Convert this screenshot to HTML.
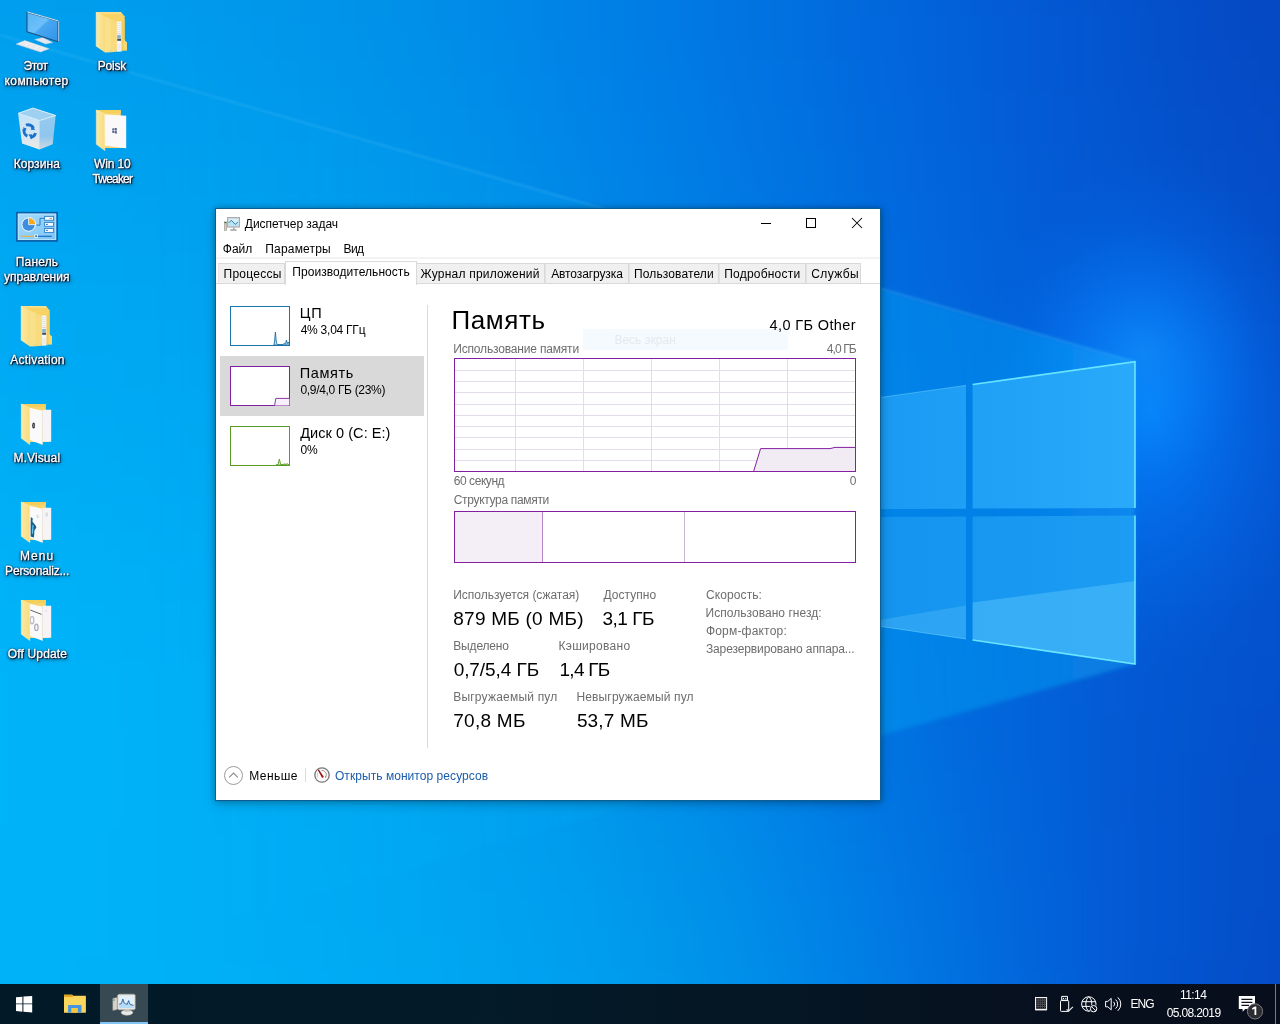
<!DOCTYPE html>
<html lang="ru"><head><meta charset="utf-8"><title>Desktop</title>
<style>
html,body{margin:0;padding:0;}
body{width:1280px;height:1024px;overflow:hidden;position:relative;background:#0078d7;font-family:"Liberation Sans",sans-serif;}
.abs{position:absolute;}
.t{position:absolute;white-space:pre;line-height:1;font-family:"Liberation Sans",sans-serif;}
svg{position:absolute;overflow:visible;}
#texts{position:absolute;left:0;top:0;width:1280px;height:1024px;will-change:transform;}

</style></head>
<body>
<svg id="wp" width="1280" height="1024" viewBox="0 0 1280 1024" style="left:0;top:0;overflow:hidden">
<defs>
  <filter id="bl" filterUnits="userSpaceOnUse" x="-400" y="-400" width="2080" height="1824" color-interpolation-filters="sRGB"><feGaussianBlur stdDeviation="75"/></filter>
  <filter id="b2" filterUnits="userSpaceOnUse" x="-50" y="-50" width="1380" height="1124"><feGaussianBlur stdDeviation="1.0"/></filter>
  <filter id="b3" filterUnits="userSpaceOnUse" x="-200" y="-200" width="1680" height="1424"><feGaussianBlur stdDeviation="2.2"/></filter>
  <radialGradient id="glow" cx="1150" cy="410" r="250" gradientUnits="userSpaceOnUse" gradientTransform="translate(1150 410) scale(0.7 1) translate(-1150 -410)">
    <stop offset="0" stop-color="#068cff" stop-opacity="0.85"/>
    <stop offset="0.45" stop-color="#047efc" stop-opacity="0.42"/>
    <stop offset="1" stop-color="#0470f0" stop-opacity="0"/>
  </radialGradient>
  <radialGradient id="glow2" cx="1142" cy="352" r="120" gradientUnits="userSpaceOnUse">
    <stop offset="0" stop-color="#1696ff" stop-opacity="0.5"/>
    <stop offset="0.5" stop-color="#0e8cff" stop-opacity="0.22"/>
    <stop offset="1" stop-color="#0a84ff" stop-opacity="0"/>
  </radialGradient>
  <linearGradient id="beam" x1="1135" y1="0" x2="150" y2="0" gradientUnits="userSpaceOnUse">
    <stop offset="0" stop-color="#12c0ff" stop-opacity="0.34"/>
    <stop offset="0.25" stop-color="#12c0ff" stop-opacity="0.26"/>
    <stop offset="0.6" stop-color="#18c4ff" stop-opacity="0.08"/>
    <stop offset="1" stop-color="#1ec8ff" stop-opacity="0"/>
  </linearGradient>
  <linearGradient id="ray" x1="1135" y1="0" x2="0" y2="0" gradientUnits="userSpaceOnUse">
    <stop offset="0" stop-color="#7fd6ff" stop-opacity="0.22"/>
    <stop offset="0.3" stop-color="#7fd6ff" stop-opacity="0.2"/>
    <stop offset="1" stop-color="#7fd6ff" stop-opacity="0.2"/>
  </linearGradient>
  <linearGradient id="pane" x1="880" y1="0" x2="1135" y2="0" gradientUnits="userSpaceOnUse">
    <stop offset="0" stop-color="#1a9af3"/>
    <stop offset="1" stop-color="#29aafa"/>
  </linearGradient>
  <linearGradient id="paneL" x1="880" y1="0" x2="1135" y2="0" gradientUnits="userSpaceOnUse">
    <stop offset="0" stop-color="#1494ef"/>
    <stop offset="1" stop-color="#1c9cf2"/>
  </linearGradient>
</defs>
<g filter="url(#bl)">
<rect x="-400" y="-400" width="480" height="464" fill="#009eed"/>
<rect x="80" y="-400" width="160" height="464" fill="#009aec"/>
<rect x="240" y="-400" width="160" height="464" fill="#0094ea"/>
<rect x="400" y="-400" width="160" height="464" fill="#008ae8"/>
<rect x="560" y="-400" width="160" height="464" fill="#007ce5"/>
<rect x="720" y="-400" width="160" height="464" fill="#016ee0"/>
<rect x="880" y="-400" width="160" height="464" fill="#025fd8"/>
<rect x="1040" y="-400" width="160" height="464" fill="#0452ce"/>
<rect x="1200" y="-400" width="480" height="464" fill="#0546c0"/>
<rect x="-400" y="64" width="480" height="128" fill="#00a4f0"/>
<rect x="80" y="64" width="160" height="128" fill="#00a0ee"/>
<rect x="240" y="64" width="160" height="128" fill="#0099ec"/>
<rect x="400" y="64" width="160" height="128" fill="#008ee9"/>
<rect x="560" y="64" width="160" height="128" fill="#0080e6"/>
<rect x="720" y="64" width="160" height="128" fill="#0171e1"/>
<rect x="880" y="64" width="160" height="128" fill="#0261da"/>
<rect x="1040" y="64" width="160" height="128" fill="#0454d0"/>
<rect x="1200" y="64" width="480" height="128" fill="#054ac5"/>
<rect x="-400" y="192" width="480" height="128" fill="#00a8f2"/>
<rect x="80" y="192" width="160" height="128" fill="#00a5f1"/>
<rect x="240" y="192" width="160" height="128" fill="#009eed"/>
<rect x="400" y="192" width="160" height="128" fill="#0093ea"/>
<rect x="560" y="192" width="160" height="128" fill="#0084e6"/>
<rect x="720" y="192" width="160" height="128" fill="#0074e2"/>
<rect x="880" y="192" width="160" height="128" fill="#0264dc"/>
<rect x="1040" y="192" width="160" height="128" fill="#0357d2"/>
<rect x="1200" y="192" width="480" height="128" fill="#044dc9"/>
<rect x="-400" y="320" width="480" height="128" fill="#00abf4"/>
<rect x="80" y="320" width="160" height="128" fill="#00a8f2"/>
<rect x="240" y="320" width="160" height="128" fill="#00a1ef"/>
<rect x="400" y="320" width="160" height="128" fill="#0097eb"/>
<rect x="560" y="320" width="160" height="128" fill="#0088e7"/>
<rect x="720" y="320" width="160" height="128" fill="#0077e4"/>
<rect x="880" y="320" width="160" height="128" fill="#0266dd"/>
<rect x="1040" y="320" width="160" height="128" fill="#035ad4"/>
<rect x="1200" y="320" width="480" height="128" fill="#0450cd"/>
<rect x="-400" y="448" width="480" height="128" fill="#00aff6"/>
<rect x="80" y="448" width="160" height="128" fill="#00adf5"/>
<rect x="240" y="448" width="160" height="128" fill="#00a5f1"/>
<rect x="400" y="448" width="160" height="128" fill="#009aec"/>
<rect x="560" y="448" width="160" height="128" fill="#008be8"/>
<rect x="720" y="448" width="160" height="128" fill="#0079e4"/>
<rect x="880" y="448" width="160" height="128" fill="#0268de"/>
<rect x="1040" y="448" width="160" height="128" fill="#035cd6"/>
<rect x="1200" y="448" width="480" height="128" fill="#0452ce"/>
<rect x="-400" y="576" width="480" height="128" fill="#00b4f9"/>
<rect x="80" y="576" width="160" height="128" fill="#00b1f7"/>
<rect x="240" y="576" width="160" height="128" fill="#00a9f3"/>
<rect x="400" y="576" width="160" height="128" fill="#009eed"/>
<rect x="560" y="576" width="160" height="128" fill="#008ee9"/>
<rect x="720" y="576" width="160" height="128" fill="#007be5"/>
<rect x="880" y="576" width="160" height="128" fill="#0268de"/>
<rect x="1040" y="576" width="160" height="128" fill="#035ad4"/>
<rect x="1200" y="576" width="480" height="128" fill="#0450cd"/>
<rect x="-400" y="704" width="480" height="128" fill="#00b4f9"/>
<rect x="80" y="704" width="160" height="128" fill="#00b1f7"/>
<rect x="240" y="704" width="160" height="128" fill="#00aaf4"/>
<rect x="400" y="704" width="160" height="128" fill="#00a0ee"/>
<rect x="560" y="704" width="160" height="128" fill="#0093ea"/>
<rect x="720" y="704" width="160" height="128" fill="#007fe5"/>
<rect x="880" y="704" width="160" height="128" fill="#016ade"/>
<rect x="1040" y="704" width="160" height="128" fill="#0358d3"/>
<rect x="1200" y="704" width="480" height="128" fill="#044dc9"/>
<rect x="-400" y="832" width="480" height="128" fill="#00b3f8"/>
<rect x="80" y="832" width="160" height="128" fill="#00b1f7"/>
<rect x="240" y="832" width="160" height="128" fill="#00abf4"/>
<rect x="400" y="832" width="160" height="128" fill="#00a4f0"/>
<rect x="560" y="832" width="160" height="128" fill="#0099ec"/>
<rect x="720" y="832" width="160" height="128" fill="#0086e7"/>
<rect x="880" y="832" width="160" height="128" fill="#016ee0"/>
<rect x="1040" y="832" width="160" height="128" fill="#0359d4"/>
<rect x="1200" y="832" width="480" height="128" fill="#044cc8"/>
<rect x="-400" y="960" width="480" height="464" fill="#00b2f8"/>
<rect x="80" y="960" width="160" height="464" fill="#00b1f7"/>
<rect x="240" y="960" width="160" height="464" fill="#00adf5"/>
<rect x="400" y="960" width="160" height="464" fill="#00a6f1"/>
<rect x="560" y="960" width="160" height="464" fill="#009ced"/>
<rect x="720" y="960" width="160" height="464" fill="#008ae8"/>
<rect x="880" y="960" width="160" height="464" fill="#0170e1"/>
<rect x="1040" y="960" width="160" height="464" fill="#0359d4"/>
<rect x="1200" y="960" width="480" height="464" fill="#054ac5"/>
</g>
<rect width="1280" height="1024" fill="url(#glow)"/>
<rect width="1280" height="1024" fill="url(#glow2)"/>
<!-- light cone to the left -->
<polygon points="1135,362 -120,0 -120,1017 1135,664" fill="url(#beam)" filter="url(#b3)"/>
<line x1="1135" y1="362" x2="0" y2="35" stroke="url(#ray)" stroke-width="1.8" filter="url(#b2)"/>
<!-- logo panes -->
<polygon points="972.6,384.5 1135,361.7 1135,508 972.6,508.6" fill="url(#pane)"/>
<polygon points="840,403.2 966,385.4 966,508.7 840,509.2" fill="url(#pane)"/>
<polygon points="972.6,516.5 1135,515.6 1135,664 972.6,640" fill="url(#paneL)"/>
<polygon points="840,517.2 966,516.5 966,639 840,620.4" fill="url(#paneL)"/>
<!-- reflections in lower panes -->
<polygon points="972.6,602.4 1135,581 1135,664 972.6,640" fill="#4cbcfa" fill-opacity="0.6"/>
<polygon points="840,626.5 966,605.4 966,639 840,620.4" fill="#43b4f8" fill-opacity="0.5"/>
<!-- bright edges -->
<polyline points="972.6,384.5 1135,361.7 1135,508" fill="none" stroke="#72ecff" stroke-opacity="0.9" stroke-width="1.6"/>
<polyline points="1135,515.6 1135,664 972.6,640" fill="none" stroke="#72ecff" stroke-opacity="0.9" stroke-width="1.6"/>
<polyline points="840,403.2 966,385.4" fill="none" stroke="#6fd6ff" stroke-opacity="0.5" stroke-width="1"/>
<polyline points="840,620.4 966,639" fill="none" stroke="#6fd6ff" stroke-opacity="0.5" stroke-width="1"/>
</svg>
<svg id="icons" width="160" height="700" viewBox="0 0 160 700" style="left:0;top:0">
<defs>
  <linearGradient id="scr" x1="0" y1="0" x2="1" y2="1">
    <stop offset="0" stop-color="#5cb4f4"/><stop offset="0.45" stop-color="#6cc0fa"/><stop offset="0.5" stop-color="#4aa6f0"/><stop offset="1" stop-color="#2f94ec"/>
  </linearGradient>
  <linearGradient id="fl" x1="0" y1="0" x2="1" y2="0">
    <stop offset="0" stop-color="#fbe9a8"/><stop offset="1" stop-color="#f9dc7e"/>
  </linearGradient>
  <linearGradient id="binF" x1="0" y1="0" x2="0" y2="1">
    <stop offset="0" stop-color="#c4e2f7"/><stop offset="0.6" stop-color="#d6e6f2"/><stop offset="1" stop-color="#eeeae6"/>
  </linearGradient>
  <linearGradient id="binR" x1="0" y1="0" x2="0" y2="1">
    <stop offset="0" stop-color="#94cbf0"/><stop offset="0.6" stop-color="#90c6ee"/><stop offset="1" stop-color="#cfd9e2"/>
  </linearGradient>
  <linearGradient id="cp" x1="0" y1="0" x2="1" y2="1">
    <stop offset="0" stop-color="#a6dcfb"/><stop offset="1" stop-color="#7cc4f6"/>
  </linearGradient>
  <g id="fbase">
    <!-- back cover -->
    <path d="M12.3 8.1H36.8V14H40V46H20Z" fill="#f7d56c"/>
    <path d="M12.3 8.1H36.8V11H14Z" fill="#f5cf5c"/>
  </g>
  <g id="fflap">
    <path d="M12.3 8.1L20.8 12V48.6L12.3 42.3Z" fill="url(#fl)"/>
    <path d="M12.3 8.1L20.8 12V48.6L12.3 42.3Z" fill="none" stroke="#fdf3c8" stroke-width=".5"/>
  </g>
</defs>
<g transform="translate(9,4)">
<path d="M7.1 40.1L15.8 36.6L40.1 44.7L31.5 48Z" fill="#f4f4f6" stroke="#c9ccd2" stroke-width=".5"/>
<path d="M9.6 40.2L32.6 47.4M12 39.2L35 46.4M14.2 38.2L37.4 45.6M12.6 41.8L16.6 38M17.6 43.4L21.6 39.6M22.6 45L26.6 41.2M27.6 46.6L31.6 42.8M32.4 47.6L36.4 44.4" stroke="#d3d6dc" stroke-width=".45" fill="none"/>
<path d="M25.7 35.6L34 33.5L43.7 38.6L36.6 40.1Z" fill="#e6e7ec" stroke="#c5c8d0" stroke-width=".4"/>
<path d="M18 8.1L49 17V37.8L18 27.7Z" fill="url(#scr)"/>
<path d="M18 8.1L49 17V37.8L18 27.7Z" fill="none" stroke="#1f4f7e" stroke-width="1.1" stroke-linejoin="round"/>
<path d="M18.2 7.9L49.1 16.8" stroke="#e8f4fd" stroke-width=".9" fill="none"/>
<path d="M49.6 17.2V37.6" stroke="#cfd8e2" stroke-width=".8" fill="none"/>
</g>
<g transform="translate(84,4)">
<path d="M12.2 8.1H36.8L40.6 12.2V45.8H20Z" fill="#f6d364"/>
<path d="M12.2 8.1H36.8L38.4 9.8H14Z" fill="#f9df8a"/>
<path d="M32.4 17.4L37.6 17.4V47.6L32.6 47.8Z" fill="#f4f6f8"/>
<path d="M33.2 19.6H36.8M33.2 21.6H36.8M33.2 23.6H36.8M33.2 25.6H36.8M33.2 27.6H36.8M33.2 41H36.8M33.2 43H36.8M33.2 45H36.8" stroke="#cfd6dd" stroke-width=".6"/>
<path d="M33.2 29.6H36.8" stroke="#e7b9c4" stroke-width=".8"/>
<rect x="33.2" y="31" width="3.6" height="3" fill="#7fb6dc"/>
<rect x="33.2" y="34.6" width="3.8" height="2.2" fill="#3f4c5a"/>
<path d="M37.6 17.4L40.6 15V45.8L37.6 47.6Z" fill="#f3cd58"/>
<path d="M39.4 35L43 38.4V46.4L39.4 46.8Z" fill="#f7d872"/>
<path d="M26.6 15L32.6 17.4V47.8L26.6 48.2Z" fill="#f8db7c"/>
<path d="M21 12.4L26.8 15V48.2L21 48.4Z" fill="#f9e08a"/>
<path d="M12.2 8.1L21 12.2V48.6L12.2 42.5Z" fill="url(#fl)"/>
<path d="M12.2 8.3V42.4" stroke="#fdf4cf" stroke-width=".6"/>
</g>
<g transform="translate(9,298)">
<path d="M12.2 8.1H36.8L40.6 12.2V45.8H20Z" fill="#f6d364"/>
<path d="M12.2 8.1H36.8L38.4 9.8H14Z" fill="#f9df8a"/>
<path d="M32.4 17.4L37.6 17.4V47.6L32.6 47.8Z" fill="#f4f6f8"/>
<path d="M33.2 19.6H36.8M33.2 21.6H36.8M33.2 23.6H36.8M33.2 25.6H36.8M33.2 27.6H36.8M33.2 41H36.8M33.2 43H36.8M33.2 45H36.8" stroke="#cfd6dd" stroke-width=".6"/>
<path d="M33.2 29.6H36.8" stroke="#e7b9c4" stroke-width=".8"/>
<rect x="33.2" y="31" width="3.6" height="3" fill="#7fb6dc"/>
<rect x="33.2" y="34.6" width="3.8" height="2.2" fill="#3f4c5a"/>
<path d="M37.6 17.4L40.6 15V45.8L37.6 47.6Z" fill="#f3cd58"/>
<path d="M39.4 35L43 38.4V46.4L39.4 46.8Z" fill="#f7d872"/>
<path d="M26.6 15L32.6 17.4V47.8L26.6 48.2Z" fill="#f8db7c"/>
<path d="M21 12.4L26.8 15V48.2L21 48.4Z" fill="#f9e08a"/>
<path d="M12.2 8.1L21 12.2V48.6L12.2 42.5Z" fill="url(#fl)"/>
<path d="M12.2 8.3V42.4" stroke="#fdf4cf" stroke-width=".6"/>
</g>
<g transform="translate(9,102)">
<path d="M9.1 11.4L30.5 18.5V47.5L13 41.6Z" fill="url(#binF)"/>
<path d="M30.5 18.5L46.7 13.5L43.7 42.2L30.5 47.5Z" fill="url(#binR)"/>
<path d="M9.1 11.4L23.9 6.1L46.7 13.5L30.5 18.5Z" fill="#9fd0f1"/>
<path d="M9.1 11.4L23.9 6.1L46.7 13.5L30.5 18.5Z" fill="none" stroke="#dcf0fd" stroke-width="1" stroke-linejoin="round"/>
<path d="M30.5 18.5V47.5" stroke="#e2eef8" stroke-width=".5"/>
<g fill="none" stroke="#1972cc" stroke-width="3">
  <path d="M17 23.2A5.6 6 0 0 1 24.4 26.2"/>
  <path d="M18.4 34.2A5.6 6 0 0 1 15.2 27"/>
  <path d="M26.4 31A5.6 6 0 0 1 21.4 35.4"/>
</g>
<path d="M14 25.2L17.6 26.4L15.8 29.6ZM23.2 23.6L26.2 28L21.8 27.8ZM19.4 32.6L22.6 37.4L23.2 32.2Z" fill="#1972cc"/>
</g>
<g transform="translate(84,102)"><use href="#fbase"/><path d="M19.3 12.2L42.2 13.7V46.2L21.1 43.7Z" fill="#fbf8fa"/><path d="M28.2 26.4L30.2 26.2V28.4L28.2 28.5ZM30.7 26.1L32.8 25.9V28.3L30.7 28.4ZM28.2 29L30.2 28.9V31.1L28.2 30.8ZM30.7 28.9L32.8 28.8V31.7L30.7 31.2Z" fill="#58648c"/><use href="#fflap"/></g>
<g transform="translate(9,396)"><use href="#fbase"/><path d="M33.5 13.7H42.2V45.7H34Z" fill="#f7f4f8"/><path d="M20.3 11.7L33.5 14.7V48.8L21.1 44.2Z" fill="#fbfafa"/><path d="M33.5 14.7V48.8" stroke="#e3e3ea" stroke-width=".6"/><ellipse cx="24.6" cy="29.5" rx="1.5" ry="2.9" fill="#3a3a40"/><ellipse cx="24.8" cy="29.5" rx=".6" ry="1.5" fill="#9a9aa2"/><use href="#fflap"/></g>
<g transform="translate(9,494)"><use href="#fbase"/><path d="M33.5 13.7H42.2V45.7H34Z" fill="#f7f4f8"/><path d="M20.3 11.7L33.5 14.7V48.8L21.1 44.2Z" fill="#fbfafa"/><path d="M33.5 14.7V48.8" stroke="#e3e3ea" stroke-width=".6"/><path d="M21.8 23L23.8 24.5L23.4 27.6L26.6 31.4L27.4 33.6L25.4 36.4L25 43.6L21.6 42.6L21.6 30Z" fill="#15608c"/><path d="M23.4 30.6L24.6 31.4L24 40L22.8 39.6Z" fill="#63c6ee"/><path d="M27.6 20.6L29.6 21V24.6L27.6 24ZM36.4 18.6H39V22.6H36.4Z" fill="#d9dde4"/><use href="#fflap"/></g>
<g transform="translate(9,592)"><use href="#fbase"/><path d="M33.5 13.7H42.2V45.7H34Z" fill="#f7f4f8"/><path d="M20.3 11.7L33.5 14.7V48.8L21.1 44.2Z" fill="#fbfafa"/><path d="M33.5 14.7V48.8" stroke="#e3e3ea" stroke-width=".6"/><path d="M21.2 18L32.6 22.4" stroke="#50525a" stroke-width=".9"/><ellipse cx="23" cy="28.2" rx="1.8" ry="3.6" fill="none" stroke="#b9bcc6" stroke-width="1.3"/><ellipse cx="27.4" cy="35.4" rx="1.7" ry="3.2" fill="none" stroke="#a9acb8" stroke-width="1.3"/><path d="M35.6 18.8L37.4 17.4L38.4 20.6Z" fill="#e0e2ea"/><use href="#fflap"/></g>
<g transform="translate(9,200)">
<rect x="7.9" y="12.7" width="40.2" height="28.2" fill="url(#cp)" stroke="#0b5fa8" stroke-width="1.7"/>
<rect x="9.3" y="14.1" width="37.4" height="25.4" fill="none" stroke="#bfe8fd" stroke-width=".8"/>
<circle cx="19.6" cy="24.6" r="6.7" fill="#3d8ede" stroke="#f2fbff" stroke-width="1"/>
<path d="M19.6 24.6V17.5A7.1 7.1 0 0 1 26.7 24.6Z" fill="#f6a91e" stroke="#f2fbff" stroke-width=".8"/>
<path d="M27.4 25.1H31V18.3H35.5" fill="none" stroke="#1c6fc0" stroke-width=".9"/>
<g fill="#f4fbff" stroke="#2b7fcc" stroke-width=".9">
<rect x="35.6" y="16.4" width="9" height="3.9"/><rect x="35.6" y="22.4" width="9" height="3.9"/><rect x="35.6" y="28.5" width="9" height="3.9"/>
</g>
<path d="M40.5 18.4H43" stroke="#c08a3a" stroke-width=".9"/><path d="M37 24.4H38.8M37 30.4H38.8" stroke="#1d5fa0" stroke-width=".9"/>
<path d="M11.7 36.3H25" stroke="#e9b24a" stroke-width="1.2"/>
<path d="M29 36.3H42.8" stroke="#1368bd" stroke-width="1.1"/>
<rect x="25.3" y="34.5" width="3.4" height="3.4" fill="#eafaff"/><rect x="26.3" y="35.4" width="1.5" height="1.6" fill="#244f7c"/>
</g>
</svg>
<div id="win" class="abs" style="left:215px;top:208px;width:664px;height:591px;background:#fff;border:1px solid #0b5f94;box-shadow:0 0 5px rgba(0,0,0,.24),0 3px 11px rgba(0,0,0,.22);"></div>
<!-- title icon -->
<svg style="left:224px;top:217px" width="17" height="15" viewBox="0 0 17 15">
  <rect x="0.4" y="5" width="2.2" height="8.6" fill="#cfcbc6" stroke="#9a948e" stroke-width=".6"/>
  <rect x="0.5" y="4.8" width="2" height="1.3" fill="#2f7d35"/>
  <rect x="3.6" y="0.5" width="11.9" height="9.6" fill="#cdd0d2" stroke="#a3a5a7" stroke-width=".9"/>
  <rect x="4.7" y="1.7" width="9.7" height="7.2" fill="#d3effb"/>
  <path d="M4.7 5.6L5.6 5.2L7.3 3.3L11.2 7.3L13.8 5.1L14.4 5.3V8.9H4.7Z" fill="#b7e4f6"/>
  <polyline points="4.7,5.5 5.6,5.2 7.3,3.3 11.2,7.3 13.8,5.1" fill="none" stroke="#1f6e96" stroke-width=".85" stroke-linejoin="round"/>
  <rect x="9" y="10.5" width="1.6" height="1.9" fill="#a7a9ab"/>
  <path d="M6.6 12.3H12.4L12.9 13.8H6Z" fill="#9fa1a3"/>
</svg>
<!-- caption buttons -->
<div class="abs" style="left:761px;top:223px;width:10px;height:1px;background:#000"></div>
<div class="abs" style="left:806px;top:218px;width:8px;height:8px;border:1px solid #000"></div>
<svg style="left:852px;top:218px" width="10" height="10" viewBox="0 0 10 10"><path d="M0 0L10 10M10 0L0 10" stroke="#000" stroke-width="1.05" fill="none"/></svg>
<!-- menu separator -->
<div class="abs" style="left:216px;top:257px;width:664px;height:2px;background:#f3f3f3"></div>
<!-- tab strip -->
<div class="abs" style="left:216px;top:283px;width:664px;height:1px;background:#d9d9d9"></div>
<div class="abs tab" style="left:218px;width:67px"></div>
<div class="abs tab" style="left:417px;width:128px;border-left:none"></div>
<div class="abs tab" style="left:545px;width:84px"></div>
<div class="abs tab" style="left:629px;width:90px"></div>
<div class="abs tab" style="left:719px;width:87px"></div>
<div class="abs tab" style="left:806px;width:55px"></div>
<div class="abs" style="left:285px;top:261px;width:130px;height:23px;background:#fff;border:1px solid #d9d9d9;border-bottom:none"></div>
<style>.tab{top:263px;height:20px;background:#f0f0f0;border:1px solid #d9d9d9;border-bottom:none;box-sizing:border-box;border-left-color:#e3e3e3}</style>

<!-- left list -->
<div class="abs" style="left:220px;top:356px;width:204px;height:60px;background:#d9d9d9"></div>
<div class="abs" style="left:230px;top:306px;width:58px;height:38px;border:1px solid #1a74ab;background:#fff"></div>
<div class="abs" style="left:230px;top:366px;width:58px;height:38px;border:1px solid #81209e;background:#fff"></div>
<div class="abs" style="left:230px;top:426px;width:58px;height:38px;border:1px solid #5a9a26;background:#fff"></div>
<svg style="left:230px;top:304.6px" width="61" height="41" viewBox="0 0 61 41">
  <path d="M44 40L44.6 36 45.4 27 46.4 38 47.5 39.5 50 39.6 53 39.6 54.5 38.2 55.6 39.4 56.4 35 57.4 38.6 58.4 37 59.6 40Z" fill="#cfe6f5" stroke="#1a6fa2" stroke-width=".9" stroke-linejoin="round"/>
</svg>
<svg style="left:230px;top:364.6px" width="61" height="41" viewBox="0 0 61 41">
  <path d="M44.6 40.4L45.8 33.4 59.4 33.4 59.4 40.4Z" fill="#f7effa"/><path d="M44.6 40.4L45.8 33.4 59.4 33.4" fill="none" stroke="#7d2598" stroke-width=".9"/>
</svg>
<svg style="left:230px;top:424.6px" width="61" height="41" viewBox="0 0 61 41">
  <path d="M46 40L48 39.4 49.4 34 50.6 39.4 53 39.6 55 38.8 56 39.6 57.4 38.6 58.4 39.6 60 40Z" fill="#dff0d0" stroke="#5a9a26" stroke-width=".9" stroke-linejoin="round"/>
</svg>
<!-- vertical divider -->
<div class="abs" style="left:427px;top:305px;width:1px;height:443px;background:#dadada"></div>

<!-- tooltip ghost -->
<div class="abs" style="left:583px;top:329px;width:205px;height:21px;background:#f5fafe"></div>

<!-- main graph -->
<svg style="left:454px;top:358px" width="402" height="114" viewBox="0 0 402 114">
  <rect x="0.5" y="0.5" width="401" height="113" fill="#fff" stroke="none"/>
  <g stroke="#e4dceb" stroke-width="1" shape-rendering="crispEdges">
    <path d="M1 12.5H401M1 23.5H401M1 34.5H401M1 46.5H401M1 57.5H401M1 68.5H401M1 79.5H401M1 91.5H401M1 102.5H401"/>
    <path d="M61.5 1V113M129.5 1V113M197.5 1V113M265.5 1V113M333.5 1V113"/>
  </g>
  <path d="M299.6 113.5L306.6 90.6 376 90.6 381 89.4 401.5 89.4 401.5 113.5Z" fill="#f1ecf4"/>
  <path d="M299.6 113.5L306.6 90.6 376 90.6 381 89.4 401.5 89.4" fill="none" stroke="#84209f" stroke-width="1"/>
  <rect x="0.5" y="0.5" width="401" height="113" fill="none" stroke="#84209f" stroke-width="1"/>
</svg>

<!-- memory composition -->
<svg style="left:454px;top:511px" width="402" height="52" viewBox="0 0 402 52">
  <rect x="0.5" y="0.5" width="401" height="51" fill="#fff"/>
  <rect x="1" y="1" width="87" height="50" fill="#f4eff6"/>
  <path d="M88.5 1V51" stroke="#b98acb" stroke-width="1" shape-rendering="crispEdges"/>
  <path d="M230.5 1V51" stroke="#c9b8d2" stroke-width="1" shape-rendering="crispEdges"/>
  <rect x="0.5" y="0.5" width="401" height="51" fill="none" stroke="#84209f" stroke-width="1"/>
</svg>

<!-- bottom bar -->
<div class="abs" style="left:224px;top:766px;width:17px;height:17px;border:1px solid #9a9a9a;border-radius:50%"></div>
<svg style="left:224px;top:766px" width="19" height="19" viewBox="0 0 19 19"><path d="M5.2 11.4L9.5 7.1 13.8 11.4" fill="none" stroke="#8a8a8a" stroke-width="1.1"/></svg>
<div class="abs" style="left:305px;top:768px;width:1px;height:14px;background:#dcdcdc"></div>
<svg style="left:314px;top:767px" width="16" height="16" viewBox="0 0 16 16">
  <circle cx="8" cy="8" r="7.2" fill="#fdfbfa" stroke="#777" stroke-width="1.3"/>
  <path d="M7.4 3.3A4.9 4.9 0 0 1 12.5 8.4" fill="none" stroke="#8d908a" stroke-width=".9"/>
  <path d="M3.6 5.6L3.2 10.6" fill="none" stroke="#b8b4b0" stroke-width=".7"/>
  <path d="M3.7 2.9L4.9 2.4L9.9 9.9L8.2 10.9Z" fill="#9c1414"/>
  <path d="M12 8.6L11.6 10.6" stroke="#b03a3a" stroke-width=".9"/>
</svg>

<div class="abs" style="left:0;top:984px;width:1280px;height:40px;background:linear-gradient(90deg,#021a27 0%,#031b29 35%,#051624 60%,#070f1d 85%,#080e1c 100%)"></div>
<!-- start -->
<svg style="left:15.7px;top:995.7px" width="16.6" height="16.6" viewBox="0 0 16.6 16.6">
  <path d="M0 1.3L6.4 0.7V7.4H0ZM7.4 0.6L16.2 0V7.4H7.4ZM0 8.3H6.4V15.7L0 15.1ZM7.4 8.3H16.2V16.6L7.4 15.8Z" fill="#fff"/>
</svg>
<!-- explorer -->
<svg style="left:64px;top:994px" width="22" height="19" viewBox="0 0 22 19">
  <path d="M0 0.7H8.2L9.2 1.7H21.7V18.6H0Z" fill="#f9cf4f"/>
  <path d="M0 0.7H8.2L9.2 1.7L8.2 3.2H0Z" fill="#e6a51e"/>
  <path d="M0 3.2H8.2L9.2 2.2H21.7V18.6H0Z" fill="#fbd65c"/>
  <path d="M4.1 18.6V10.9H17.5V18.6H13.6V14H7.6V18.6Z" fill="#4496e0"/>
  <path d="M7.6 14H13.6V18.6H7.6Z" fill="#f6c840"/>
</svg>
<!-- active task -->
<div class="abs" style="left:100px;top:984px;width:48px;height:40px;background:#374a54"></div>
<div class="abs" style="left:100px;top:1022px;width:48px;height:2px;background:#83c2f4"></div>
<svg style="left:112px;top:993px" width="24" height="23" viewBox="0 0 24 23">
  <path d="M0.8 5.4L5.2 4.4V16.6L0.8 17.4Z" fill="#d6d3cd" stroke="#9b9892" stroke-width=".5"/>
  <rect x="1.4" y="6.4" width="1.2" height="1.4" fill="#3d8f45"/>
  <ellipse cx="15" cy="19.6" rx="5.8" ry="2.7" fill="#ebe9e6" stroke="#b9b6b0" stroke-width=".5"/>
  <path d="M13.4 15.4H17L17.6 19H12.8Z" fill="#c9c6c0"/>
  <path d="M5.6 2.4L6.8 1.2H22.2L23.2 2.4V15.6L22.2 16.8H6.8L5.6 15.6Z" fill="#e8e7e4" stroke="#a9a7a2" stroke-width=".6"/>
  <rect x="7.2" y="3" width="14.4" height="12" fill="#dff0fc"/>
  <path d="M7.2 11.2L9.4 10.6L10.8 6L12.2 10L13.6 10.8L15.2 11.4L16.6 7.6L18 11.4L21.6 12.4V15H7.2Z" fill="#b5dbf6"/>
  <path d="M7.2 11.2L9.4 10.6L10.8 6L12.2 10L13.6 10.8L15.2 11.4L16.6 7.6L18 11.4L21.6 12.4" fill="none" stroke="#2c5f9e" stroke-width=".9" stroke-linejoin="round"/>
</svg>
<!-- tray: grid icon -->
<svg style="left:1035px;top:997px" width="13" height="14" viewBox="0 0 13 14">
  <rect x="0.5" y="0.5" width="11.1" height="12.3" fill="#4a4c52" stroke="#f4f4f4" stroke-width="1"/>
  <path d="M0.5 12.6H11.6" stroke="#f4f4f4" stroke-width="1.2"/>
  <g fill="#05080c">
  <path d="M1.6 1.6h1v1h-1zM3.7 1.6h1v1h-1zM5.8 1.6h1v1h-1zM7.9 1.6h1v1h-1zM10 1.6h.8v1H10zM1.6 3.7h1v1h-1zM3.7 3.7h1v1h-1zM5.8 3.7h1v1h-1zM7.9 3.7h1v1h-1zM10 3.7h.8v1H10zM1.6 5.8h1v1h-1zM3.7 5.8h1v1h-1zM5.8 5.8h1v1h-1zM7.9 5.8h1v1h-1zM10 5.8h.8v1H10zM1.6 7.9h1v1h-1zM3.7 7.9h1v1h-1zM5.8 7.9h1v1h-1zM7.9 7.9h1v1h-1zM10 7.9h.8v1H10zM1.6 10h1v1h-1zM3.7 10h1v1h-1zM5.8 10h1v1h-1zM7.9 10h1v1h-1zM10 10h.8v1H10z"/>
  </g>
</svg>
<!-- usb -->
<svg style="left:1059px;top:995px" width="16" height="18" viewBox="0 0 16 18">
  <path d="M2.7 1.4H8.5V5.2H2.7Z" fill="none" stroke="#fff" stroke-width="1"/>
  <rect x="3.9" y="2.9" width="1.1" height="1.1" fill="#fff"/><rect x="6.2" y="2.9" width="1.1" height="1.1" fill="#fff"/>
  <path d="M2.2 5.6H9A0.7 0.7 0 0 1 9.7 6.3V15.6A0.8 0.8 0 0 1 8.9 16.4H2.3A0.8 0.8 0 0 1 1.5 15.6V6.3A0.7 0.7 0 0 1 2.2 5.6Z" fill="none" stroke="#fff" stroke-width="1"/>
  <path d="M7.6 14.3L9.5 16.2L13.9 11.8" fill="none" stroke="#e6e9ec" stroke-width="1.2"/>
</svg>
<!-- globe -->
<svg style="left:1081px;top:996px" width="17" height="17" viewBox="0 0 17 17">
  <circle cx="7.8" cy="8" r="7.2" fill="none" stroke="#fff" stroke-width="1"/>
  <path d="M7.8 0.8C3.8 3.4 3.8 12.6 7.8 15.2M7.8 0.8C11.8 3.4 11.8 12.6 7.8 15.2" fill="none" stroke="#fff" stroke-width="1"/>
  <path d="M1 5.7H14.6M1 10.4H14.6" stroke="#fff" stroke-width="1" fill="none"/>
  <circle cx="12.6" cy="12.7" r="4.3" fill="#08111f"/>
  <circle cx="12.6" cy="12.7" r="3.2" fill="none" stroke="#fff" stroke-width="1"/>
  <path d="M10.4 10.5L14.8 14.9" stroke="#fff" stroke-width="1"/>
</svg>
<!-- speaker -->
<svg style="left:1104.9px;top:996px" width="18" height="16" viewBox="0 0 18 16">
  <path d="M0.6 5.4H2.8L6.2 2.4V13.8L2.8 10.8H0.6Z" fill="none" stroke="#fff" stroke-width="1" stroke-linejoin="miter"/>
  <path d="M8.6 5.8A3.2 3.2 0 0 1 8.6 10.4" fill="none" stroke="#fff" stroke-width="1"/>
  <path d="M10.6 3.6A6 6 0 0 1 10.6 12.6" fill="none" stroke="#fff" stroke-width="1"/>
  <path d="M12.8 1.4A9 9 0 0 1 12.8 14.8" fill="none" stroke="#fff" stroke-width="1"/>
</svg>
<!-- action center -->
<svg style="left:1238px;top:995px" width="26" height="26" viewBox="0 0 26 26">
  <path d="M0.8 1H17V14H7.2L4.6 16.8V14H0.8Z" fill="#fff"/>
  <path d="M3.4 4.4H14.4M3.4 7.4H14.4M3.4 10.4H11" stroke="#0a1220" stroke-width="1.1"/>
  <circle cx="17" cy="16.4" r="7.6" fill="#2c2d32" stroke="#7a7c82" stroke-width="1"/>
  <path d="M18.3 11.5V20H16.5V13.7L14.2 14.7V13.1L17 11.5Z" fill="#fff"/>
</svg>
<div class="abs" style="left:1275px;top:984px;width:1px;height:40px;background:#767b86"></div>

<div id="texts">
<span class="t" style="left:23.48px;top:60.00px;font-size:12px;color:#fff;letter-spacing:-0.433px;text-shadow:1px 1px 1px rgba(0,5,30,.95),0 0 2px rgba(0,5,30,.9),0 1px 3px rgba(0,5,30,.75),1px 2px 4px rgba(0,5,30,.5);-webkit-text-stroke:0.3px #fff;">Этот</span>
<span class="t" style="left:4.55px;top:75.00px;font-size:12px;color:#fff;letter-spacing:0.394px;text-shadow:1px 1px 1px rgba(0,5,30,.95),0 0 2px rgba(0,5,30,.9),0 1px 3px rgba(0,5,30,.75),1px 2px 4px rgba(0,5,30,.5);-webkit-text-stroke:0.3px #fff;">компьютер</span>
<span class="t" style="left:97.68px;top:60.00px;font-size:12px;color:#fff;letter-spacing:-0.171px;text-shadow:1px 1px 1px rgba(0,5,30,.95),0 0 2px rgba(0,5,30,.9),0 1px 3px rgba(0,5,30,.75),1px 2px 4px rgba(0,5,30,.5);-webkit-text-stroke:0.3px #fff;">Poisk</span>
<span class="t" style="left:13.63px;top:158.00px;font-size:12px;color:#fff;letter-spacing:0.098px;text-shadow:1px 1px 1px rgba(0,5,30,.95),0 0 2px rgba(0,5,30,.9),0 1px 3px rgba(0,5,30,.75),1px 2px 4px rgba(0,5,30,.5);-webkit-text-stroke:0.3px #fff;">Корзина</span>
<span class="t" style="left:94.12px;top:158.00px;font-size:12px;color:#fff;letter-spacing:-0.179px;text-shadow:1px 1px 1px rgba(0,5,30,.95),0 0 2px rgba(0,5,30,.9),0 1px 3px rgba(0,5,30,.75),1px 2px 4px rgba(0,5,30,.5);-webkit-text-stroke:0.3px #fff;">Win 10</span>
<span class="t" style="left:92.40px;top:173.00px;font-size:12px;color:#fff;letter-spacing:-0.797px;text-shadow:1px 1px 1px rgba(0,5,30,.95),0 0 2px rgba(0,5,30,.9),0 1px 3px rgba(0,5,30,.75),1px 2px 4px rgba(0,5,30,.5);-webkit-text-stroke:0.3px #fff;">Tweaker</span>
<span class="t" style="left:15.83px;top:256.00px;font-size:12px;color:#fff;letter-spacing:0.159px;text-shadow:1px 1px 1px rgba(0,5,30,.95),0 0 2px rgba(0,5,30,.9),0 1px 3px rgba(0,5,30,.75),1px 2px 4px rgba(0,5,30,.5);-webkit-text-stroke:0.3px #fff;">Панель</span>
<span class="t" style="left:3.93px;top:271.00px;font-size:12px;color:#fff;letter-spacing:0.011px;text-shadow:1px 1px 1px rgba(0,5,30,.95),0 0 2px rgba(0,5,30,.9),0 1px 3px rgba(0,5,30,.75),1px 2px 4px rgba(0,5,30,.5);-webkit-text-stroke:0.3px #fff;">управления</span>
<span class="t" style="left:10.13px;top:354.00px;font-size:12px;color:#fff;letter-spacing:0.261px;text-shadow:1px 1px 1px rgba(0,5,30,.95),0 0 2px rgba(0,5,30,.9),0 1px 3px rgba(0,5,30,.75),1px 2px 4px rgba(0,5,30,.5);-webkit-text-stroke:0.3px #fff;">Activation</span>
<span class="t" style="left:13.58px;top:452.00px;font-size:12px;color:#fff;letter-spacing:0.096px;text-shadow:1px 1px 1px rgba(0,5,30,.95),0 0 2px rgba(0,5,30,.9),0 1px 3px rgba(0,5,30,.75),1px 2px 4px rgba(0,5,30,.5);-webkit-text-stroke:0.3px #fff;">M.Visual</span>
<span class="t" style="left:20.08px;top:550.00px;font-size:12px;color:#fff;letter-spacing:1.024px;text-shadow:1px 1px 1px rgba(0,5,30,.95),0 0 2px rgba(0,5,30,.9),0 1px 3px rgba(0,5,30,.75),1px 2px 4px rgba(0,5,30,.5);-webkit-text-stroke:0.3px #fff;">Menu</span>
<span class="t" style="left:5.08px;top:565.00px;font-size:12px;color:#fff;letter-spacing:-0.158px;text-shadow:1px 1px 1px rgba(0,5,30,.95),0 0 2px rgba(0,5,30,.9),0 1px 3px rgba(0,5,30,.75),1px 2px 4px rgba(0,5,30,.5);-webkit-text-stroke:0.3px #fff;">Personaliz...</span>
<span class="t" style="left:7.84px;top:648.00px;font-size:12px;color:#fff;letter-spacing:0.141px;text-shadow:1px 1px 1px rgba(0,5,30,.95),0 0 2px rgba(0,5,30,.9),0 1px 3px rgba(0,5,30,.75),1px 2px 4px rgba(0,5,30,.5);-webkit-text-stroke:0.3px #fff;">Off Update</span>
<span class="t" style="left:244.81px;top:218.00px;font-size:12px;color:#000;letter-spacing:-0.046px;">Диспетчер задач</span>
<span class="t" style="left:222.78px;top:243.00px;font-size:12px;color:#000;">Файл</span>
<span class="t" style="left:265.28px;top:243.00px;font-size:12px;color:#000;letter-spacing:0.181px;">Параметры</span>
<span class="t" style="left:343.48px;top:243.00px;font-size:12px;color:#000;letter-spacing:-0.533px;">Вид</span>
<span class="t" style="left:223.58px;top:268.00px;font-size:12px;color:#000;letter-spacing:0.246px;">Процессы</span>
<span class="t" style="left:292.28px;top:266.00px;font-size:12px;color:#000;letter-spacing:0.053px;">Производительность</span>
<span class="t" style="left:420.48px;top:268.00px;font-size:12px;color:#000;letter-spacing:0.227px;">Журнал приложений</span>
<span class="t" style="left:551.18px;top:268.00px;font-size:12px;color:#000;letter-spacing:-0.101px;">Автозагрузка</span>
<span class="t" style="left:634.08px;top:268.00px;font-size:12px;color:#000;letter-spacing:0.115px;">Пользователи</span>
<span class="t" style="left:724.28px;top:268.00px;font-size:12px;color:#000;letter-spacing:0.207px;">Подробности</span>
<span class="t" style="left:811.34px;top:268.00px;font-size:12px;color:#000;letter-spacing:0.351px;">Службы</span>
<span class="t" style="left:299.73px;top:305.75px;font-size:14.5px;color:#000;letter-spacing:0.833px;">ЦП</span>
<span class="t" style="left:300.65px;top:324.00px;font-size:12px;color:#000;letter-spacing:-0.237px;">4% 3,04 ГГц</span>
<span class="t" style="left:299.75px;top:365.75px;font-size:14.5px;color:#000;letter-spacing:0.602px;">Память</span>
<span class="t" style="left:300.47px;top:384.00px;font-size:12px;color:#000;letter-spacing:-0.323px;">0,9/4,0 ГБ (23%)</span>
<span class="t" style="left:300.19px;top:425.75px;font-size:14.5px;color:#000;letter-spacing:0.056px;">Диск 0 (C: E:)</span>
<span class="t" style="left:300.47px;top:444.00px;font-size:12px;color:#000;letter-spacing:-0.125px;">0%</span>
<span class="t" style="left:451.39px;top:307.00px;font-size:26px;color:#000;letter-spacing:0.620px;">Память</span>
<span class="t" style="left:769.62px;top:317.75px;font-size:14.5px;color:#000;letter-spacing:0.375px;">4,0 ГБ Other</span>
<span class="t" style="left:453.28px;top:343.00px;font-size:12px;color:#6d6d6d;letter-spacing:-0.175px;">Использование памяти</span>
<span class="t" style="left:826.65px;top:343.00px;font-size:12px;color:#6d6d6d;letter-spacing:-0.871px;">4,0 ГБ</span>
<span class="t" style="left:453.74px;top:475.00px;font-size:12px;color:#6d6d6d;letter-spacing:-0.442px;">60 секунд</span>
<span class="t" style="left:849.87px;top:475.00px;font-size:12px;color:#6d6d6d;">0</span>
<span class="t" style="left:614.48px;top:334.00px;font-size:12px;color:#e4e9ee;letter-spacing:-0.033px;">Весь экран</span>
<span class="t" style="left:453.74px;top:494.00px;font-size:12px;color:#6d6d6d;letter-spacing:-0.322px;">Структура памяти</span>
<span class="t" style="left:453.28px;top:589.00px;font-size:12px;color:#6d6d6d;letter-spacing:-0.029px;">Используется (сжатая)</span>
<span class="t" style="left:603.41px;top:589.00px;font-size:12px;color:#6d6d6d;letter-spacing:0.057px;">Доступно</span>
<span class="t" style="left:453.32px;top:609.00px;font-size:19px;color:#000;letter-spacing:0.236px;">879 МБ (0 МБ)</span>
<span class="t" style="left:602.51px;top:609.00px;font-size:19px;color:#000;letter-spacing:-0.489px;">3,1 ГБ</span>
<span class="t" style="left:453.28px;top:640.00px;font-size:12px;color:#6d6d6d;letter-spacing:-0.165px;">Выделено</span>
<span class="t" style="left:558.48px;top:640.00px;font-size:12px;color:#6d6d6d;letter-spacing:0.294px;">Кэшировано</span>
<span class="t" style="left:453.65px;top:660.00px;font-size:19px;color:#000;letter-spacing:-0.064px;">0,7/5,4 ГБ</span>
<span class="t" style="left:559.50px;top:660.00px;font-size:19px;color:#000;letter-spacing:-0.727px;">1,4 ГБ</span>
<span class="t" style="left:453.28px;top:691.00px;font-size:12px;color:#6d6d6d;letter-spacing:0.201px;">Выгружаемый пул</span>
<span class="t" style="left:576.48px;top:691.00px;font-size:12px;color:#6d6d6d;letter-spacing:0.139px;">Невыгружаемый пул</span>
<span class="t" style="left:453.28px;top:711.00px;font-size:19px;color:#000;letter-spacing:0.264px;">70,8 МБ</span>
<span class="t" style="left:576.88px;top:711.00px;font-size:19px;color:#000;letter-spacing:0.164px;">53,7 МБ</span>
<span class="t" style="left:705.94px;top:589.00px;font-size:12px;color:#6d6d6d;letter-spacing:0.106px;">Скорость:</span>
<span class="t" style="left:705.48px;top:607.00px;font-size:12px;color:#6d6d6d;letter-spacing:0.044px;">Использовано гнезд:</span>
<span class="t" style="left:705.88px;top:625.00px;font-size:12px;color:#6d6d6d;letter-spacing:0.195px;">Форм-фактор:</span>
<span class="t" style="left:705.91px;top:643.00px;font-size:12px;color:#6d6d6d;letter-spacing:-0.110px;">Зарезервировано аппара...</span>
<span class="t" style="left:249.28px;top:770.00px;font-size:12px;color:#000;letter-spacing:0.455px;">Меньше</span>
<span class="t" style="left:334.99px;top:770.00px;font-size:12px;color:#1a5dab;letter-spacing:0.055px;">Открыть монитор ресурсов</span>
<span class="t" style="left:1130.48px;top:998.00px;font-size:12px;color:#fff;letter-spacing:-1.002px;">ENG</span>
<span class="t" style="left:1179.91px;top:989.00px;font-size:12px;color:#fff;letter-spacing:-0.537px;">11:14</span>
<span class="t" style="left:1166.72px;top:1007.00px;font-size:12px;color:#fff;letter-spacing:-0.634px;">05.08.2019</span>
</div>
</body></html>
